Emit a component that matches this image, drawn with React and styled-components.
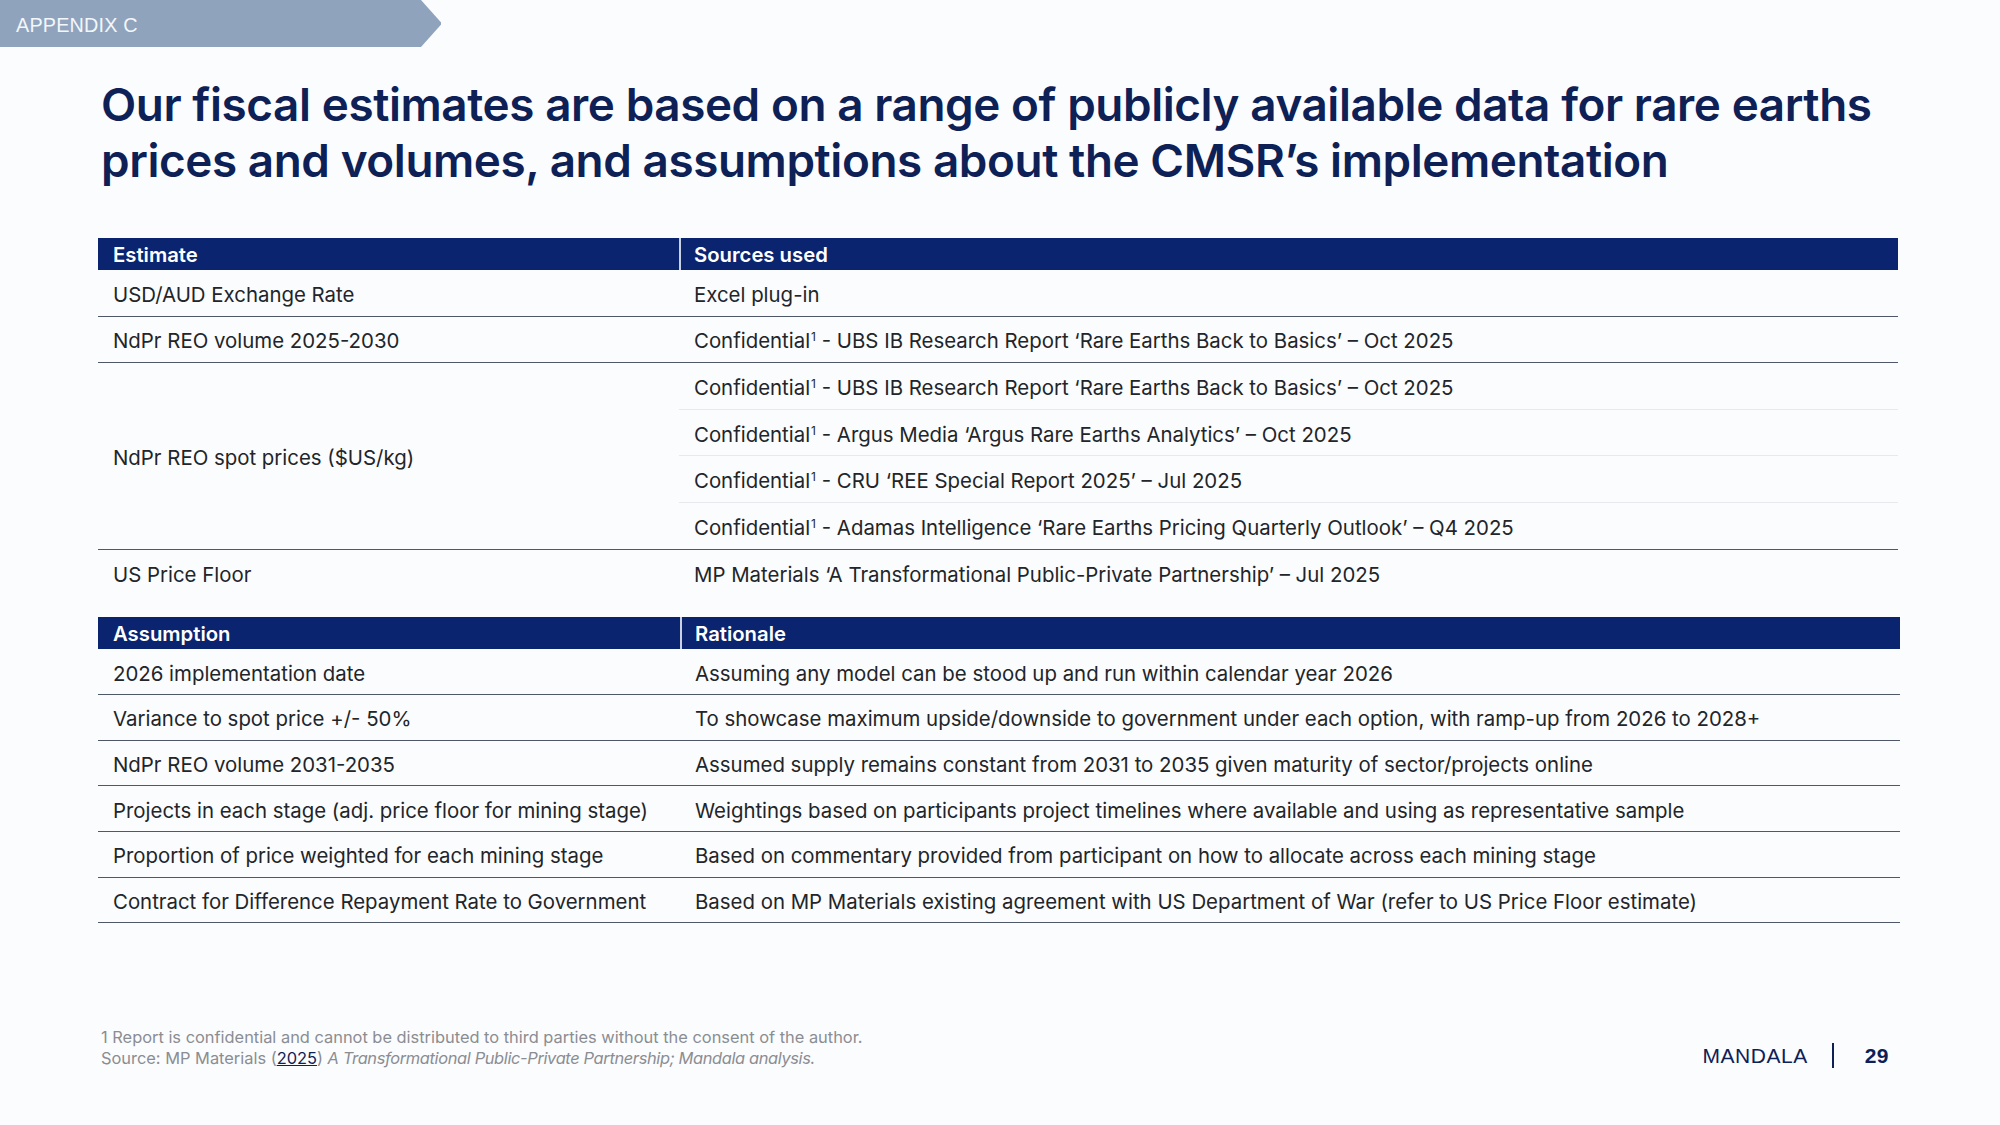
import React from "react";
import styled, { createGlobalStyle } from "styled-components";

const GlobalStyle = createGlobalStyle`
  html, body {
    margin: 0;
    padding: 0;
    background: #fbfcfe;
  }
  body {
    font-family: Inter, "Liberation Sans", sans-serif;
    color: #222529;
  }
`;

const estimates = [
  { label: "USD/AUD Exchange Rate", sources: ["Excel plug-in"] },
  {
    label: "NdPr REO volume 2025-2030",
    sources: [
      "UBS IB Research Report ‘Rare Earths Back to Basics’ – Oct 2025",
    ],
    confidential: true,
  },
  {
    label: "NdPr REO spot prices ($US/kg)",
    sources: [
      "UBS IB Research Report ‘Rare Earths Back to Basics’ – Oct 2025",
      "Argus Media ‘Argus Rare Earths Analytics’ – Oct 2025",
      "CRU ‘REE Special Report 2025’ – Jul 2025",
      "Adamas Intelligence ‘Rare Earths Pricing Quarterly Outlook’ – Q4 2025",
    ],
    confidential: true,
  },
  {
    label: "US Price Floor",
    sources: ["MP Materials ‘A Transformational Public-Private Partnership’ – Jul 2025"],
    last: true,
  },
];

const assumptions = [
  ["2026 implementation date", "Assuming any model can be stood up and run within calendar year 2026"],
  ["Variance to spot price +/- 50%", "To showcase maximum upside/downside to government under each option, with ramp-up from 2026 to 2028+"],
  ["NdPr REO volume 2031-2035", "Assumed supply remains constant from 2031 to 2035 given maturity of sector/projects online"],
  ["Projects in each stage (adj. price floor for mining stage)", "Weightings based on participants project timelines where available and using as representative sample"],
  ["Proportion of price weighted for each mining stage", "Based on commentary provided from participant on how to allocate across each mining stage"],
  ["Contract for Difference Repayment Rate to Government", "Based on MP Materials existing agreement with US Department of War (refer to US Price Floor estimate)"],
];

const App = () => {
  return (
    <Page>
      <GlobalStyle />
      <Tab>APPENDIX C</Tab>
      <Title>
        Our fiscal estimates are based on a range of publicly available data for rare earths
        <br />
        prices and volumes, and assumptions about the CMSR’s implementation
      </Title>

      <Table $width={1800} $left={581} $rowH={46.6}>
        <HeadCell>Estimate</HeadCell>
        <HeadCell $divider>Sources used</HeadCell>
        {estimates.map((e, i) => (
          <React.Fragment key={i}>
            <Cell $span={e.sources.length} $noBorder={e.last}>
              {e.label}
            </Cell>
            {e.sources.map((s, j) => (
              <Cell
                key={j}
                $right
                $light={j < e.sources.length - 1}
                $noBorder={e.last}
              >
                {e.confidential ? (
                  <span>
                    Confidential<Sup>1</Sup>{"\u00a0- "}{s}
                  </span>
                ) : (
                  s
                )}
              </Cell>
            ))}
          </React.Fragment>
        ))}
      </Table>

      <Table $width={1802} $left={582} $rowH={45.7} $gap>
        <HeadCell>Assumption</HeadCell>
        <HeadCell $divider>Rationale</HeadCell>
        {assumptions.map(([a, r], i) => (
          <React.Fragment key={i}>
            <Cell>{a}</Cell>
            <Cell $right>{r}</Cell>
          </React.Fragment>
        ))}
      </Table>

      <Footer>
        <Notes>
          <div>1 Report is confidential and cannot be distributed to third parties without the consent of the author.</div>
          <div>
            Source: MP Materials (<Link>2025</Link>){" "}
            <Italic>A Transformational Public-Private Partnership; Mandala analysis.</Italic>
          </div>
        </Notes>
        <Brand>
          <span>MANDALA</span>
          <Bar />
          <PageNum>29</PageNum>
        </Brand>
      </Footer>
    </Page>
  );
};

const Page = styled.div`
  width: 2000px;
  height: 1125px;
  position: relative;
  overflow: hidden;
  background: #fbfcfe;
`;

const Tab = styled.div`
  width: 441px;
  height: 47px;
  box-sizing: border-box;
  padding: 14px 0 0 16px;
  background: #8fa3bd;
  color: #f3f6fa;
  font-size: 19.8px;
  font-family: "Liberation Sans", Arial, sans-serif;
  letter-spacing: 0.2px;
  clip-path: polygon(0 0, 421px 0, 442px 23.5px, 421px 47px, 0 47px);
`;

const Title = styled.h1`
  margin: 30px 0 0 101px;
  font-size: 45.8px;
  line-height: 56px;
  font-weight: 600;
  color: #0e2156;
  letter-spacing: -0.4px;
`;

const Table = styled.div`
  display: grid;
  grid-template-columns: ${(p) => p.$left}px 1fr;
  grid-auto-rows: ${(p) => p.$rowH}px;
  grid-template-rows: 32px;
  width: ${(p) => p.$width}px;
  margin: ${(p) => (p.$gap ? "21px" : "49px")} 0 0 98px;
`;

const HeadCell = styled.div`
  background: #0b2470;
  color: #ffffff;
  font-weight: 600;
  font-size: 20.3px;
  display: flex;
  align-items: center;
  padding-left: ${(p) => (p.$divider ? "13px" : "15px")};
  border-left: ${(p) => (p.$divider ? "2px solid #c9d2e3" : "none")};
`;

const Cell = styled.div`
  grid-row: ${(p) => (p.$span ? `span ${p.$span}` : "auto")};
  display: flex;
  align-items: center;
  box-sizing: border-box;
  padding: 3px 0 0 15px;
  font-size: 20.4px;
  color: #222529;
  border-bottom: ${(p) =>
    p.$noBorder
      ? "none"
      : p.$light
      ? "1.5px solid #e7e9ed"
      : "1.5px solid #4f5868"};
`;

const Sup = styled.sup`
  font-size: 12px;
  line-height: 0;
  vertical-align: 7px;
  margin-left: 1px;
`;

const Footer = styled.div`
  position: absolute;
  left: 101px;
  right: 111px;
  bottom: 57px;
  display: flex;
  align-items: flex-end;
  justify-content: space-between;
`;

const Notes = styled.div`
  font-size: 16.4px;
  line-height: 20.4px;
  color: #8a8d92;
`;

const Italic = styled.em`
  letter-spacing: -0.35px;
`;

const Link = styled.span`
  color: #0e2156;
  text-decoration: underline;
`;

const Brand = styled.div`
  display: flex;
  align-items: center;
  font-family: "Liberation Sans", Arial, sans-serif;
  font-size: 21px;
  color: #0e2156;
  letter-spacing: 0.5px;
  margin-bottom: 0;
`;

const Bar = styled.div`
  width: 2px;
  height: 25px;
  background: #0e2156;
  margin: 0 31px 0 24px;
`;

const PageNum = styled.span`
  font-weight: 700;
`;

export default App;
